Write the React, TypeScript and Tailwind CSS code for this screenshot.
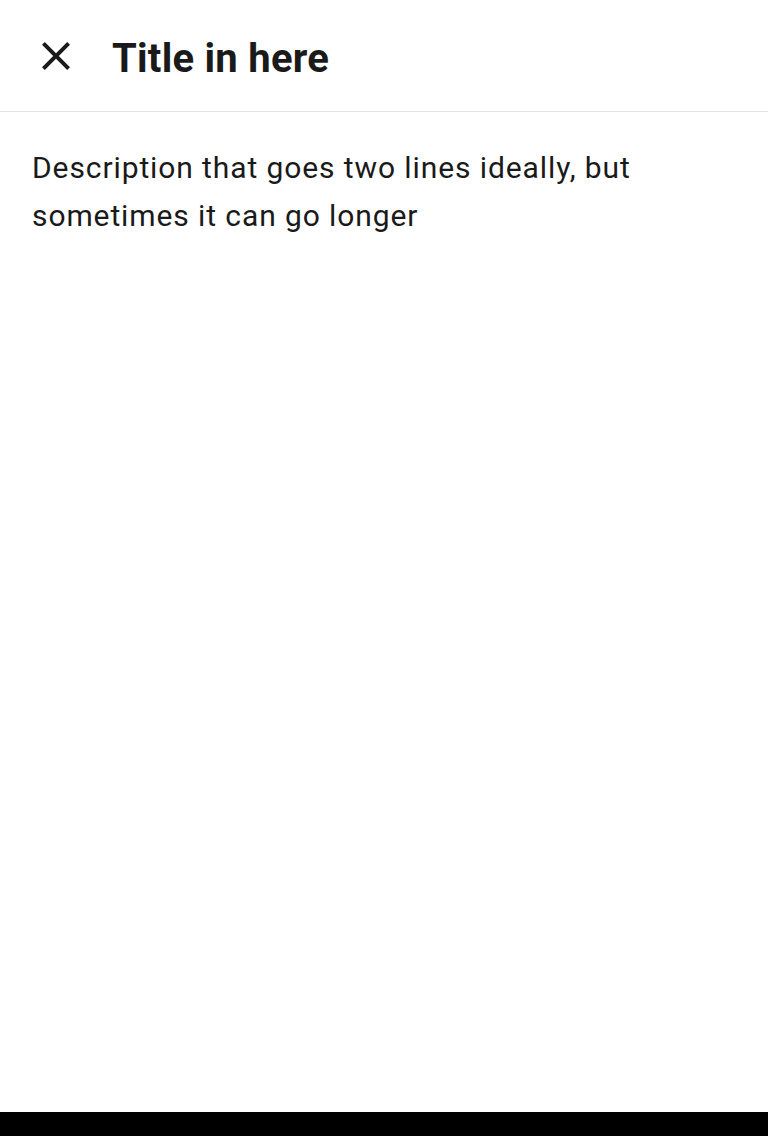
export default function App() {
  return (
    <div className="w-[768px] h-[1136px] bg-white flex flex-col" style={{ fontFamily: "Roboto, 'Liberation Sans', sans-serif" }}>
      <div className="h-[112px] shrink-0 flex items-center border-b border-[#e3e3e3]">
        <div className="w-[112px] h-full flex items-center justify-center shrink-0">
          <svg width="48" height="48" viewBox="0 0 24 24" className="text-[#1a1a1a]">
            <path fill="currentColor" d="M19 6.41L17.59 5 12 10.59 6.41 5 5 6.41 10.59 12 5 17.59 6.41 19 12 13.41 17.59 19 19 17.59 13.41 12z" />
          </svg>
        </div>
        <h1 className="text-[40px] font-bold text-[#1a1a1a] leading-none tracking-[0.25px] mt-[6px]">Title in here</h1>
      </div>
      <div className="flex-1 px-[32px] pt-[32px]">
        <p className="text-[30px] leading-[48px] tracking-[0.9px] text-[#1a1a1a] max-w-[660px]">
          Description that goes two lines ideally, but sometimes it can go longer
        </p>
      </div>
      <div className="h-[24px] bg-black shrink-0" />
    </div>
  );
}
